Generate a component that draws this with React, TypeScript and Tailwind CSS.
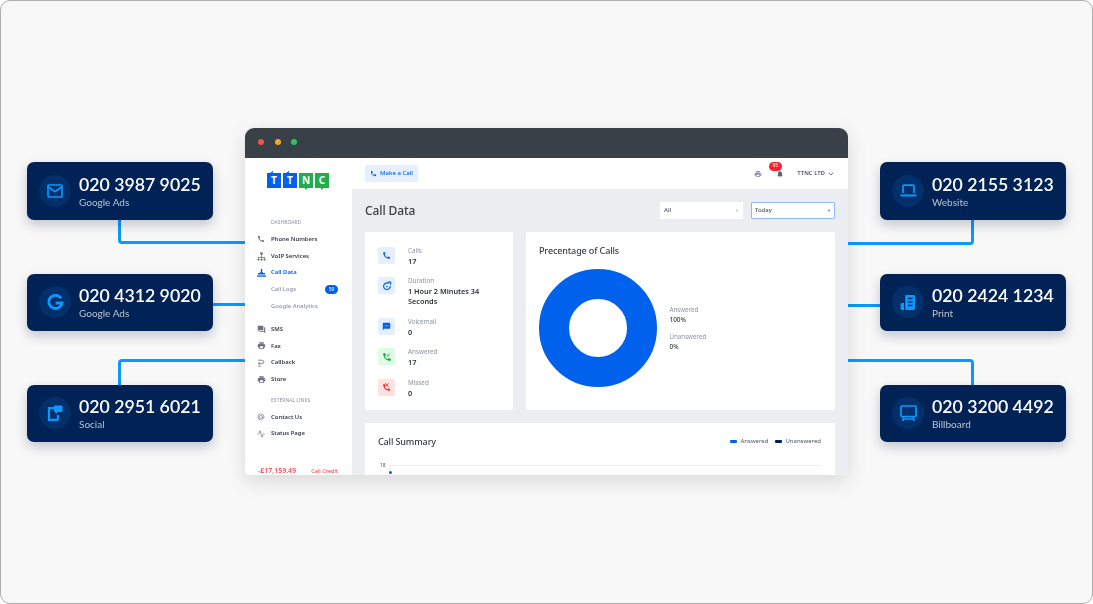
import React from 'react';
import { Activity, ChevronDown, X } from 'lucide-react';
import {
  MdAlternateEmail,
  MdCall,
  MdForum,
  MdNotifications,
  MdPhoneCallback,
  MdPrint,
  MdSms,
} from 'react-icons/md';

const BLUE = '#0a99ff';

// Icons for the number cards
const MailIcon = () => (
  <svg width="16" height="14" viewBox="0 0 16 14" fill="none" stroke={BLUE} strokeWidth="1.7">
    <rect x="1" y="1" width="14" height="12" rx="1" />
    <path d="M1.5 3l6.5 4.6L14.5 3" />
  </svg>
);

const GoogleIcon = () => (
  <svg width="17" height="17" viewBox="0 0 17 17" fill="none" stroke={BLUE} strokeWidth="2.8">
    <path d="M14 4.2A6.6 6.6 0 1 0 15 9H8.6" />
  </svg>
);

const SocialIcon = () => (
  <svg width="16" height="16" viewBox="0 0 16 16" fill="none">
    <path d="M8 3.2H2v11.6h7.5a1.5 1.5 0 0 0 1.5-1.5V10" stroke={BLUE} strokeWidth="2.2" />
    <rect x="7" y="0.5" width="8.5" height="6.5" rx="1" fill={BLUE} />
    <path d="M8.5 7v2.5L11 7z" fill={BLUE} />
  </svg>
);

const LaptopIcon = () => (
  <svg width="17" height="14" viewBox="0 0 17 14" fill="none" stroke={BLUE} strokeWidth="1.7">
    <path d="M3 9V2.2a1 1 0 0 1 1-1h9a1 1 0 0 1 1 1V9" />
    <path d="M0.5 11.5h16" strokeWidth="2" />
  </svg>
);

const PrintIcon = () => (
  <svg width="16" height="17" viewBox="0 0 16 17" fill="none">
    <rect x="5.2" y="1" width="9.8" height="15" rx="1" fill={BLUE} />
    <path d="M8 4.5h4.5M8 8h4.5M8 11.5h4.5" stroke="#03306a" strokeWidth="1.6" />
    <path d="M4 9H2a1.4 1.4 0 0 0-1.4 1.4v4A1.6 1.6 0 0 0 2.2 16H4z" fill={BLUE} />
  </svg>
);

const BillboardIcon = () => (
  <svg width="17" height="17" viewBox="0 0 17 17" fill="none" stroke={BLUE} strokeWidth="1.7">
    <rect x="1" y="1" width="15" height="10.5" rx="1" />
    <path d="M4 11.5L2.8 16M13 11.5l1.2 4.5M3.5 14h10" />
  </svg>
);

// Sidebar icons the packages have no close match for
const VoipIcon = () => (
  <svg width="9" height="9" viewBox="0 0 9 9" fill="currentColor">
    <circle cx="4.5" cy="1.6" r="1.4" />
    <path d="M4.1 3h.8v2h3v1.5h-.8V5.8H4.9v.7h-.8v-.7H1.9v.7h-.8V5h3z" />
    <circle cx="1.5" cy="7.6" r="1.1" />
    <circle cx="4.5" cy="7.6" r="1.1" />
    <circle cx="7.5" cy="7.6" r="1.1" />
  </svg>
);

const CallDataIcon = () => (
  <svg width="9" height="9" viewBox="0 0 9 9" fill="#0061ec">
    <rect x="0" y="7.4" width="9" height="1.3" />
    <path d="M1 6.6V5h1.6l1.2-1V1h1.4v3l1.2 1H8v1.6z" />
  </svg>
);

const CallbackIcon = () => (
  <svg width="8" height="8" viewBox="0 0 8 8" fill="none" stroke="currentColor" strokeWidth="0.8">
    <path d="M1 1.2h4.2a1.7 1.7 0 0 1 0 3.4H1.4" />
    <path d="M2.8 3.2L1.2 4.6l1.6 1.4M1 7.2h3" />
  </svg>
);

const DurationIcon = () => (
  <svg width="10" height="10" viewBox="0 0 10 10" fill="none" stroke="#0061ec" strokeWidth="1.2">
    <path d="M6.6 2.4A3.3 3.3 0 1 0 8.2 5" />
    <circle cx="4.9" cy="5.6" r="0.8" fill="#0061ec" stroke="none" />
    <path d="M5.6 1.2h3v2.6" />
  </svg>
);

const MissedIcon = () => (
  <div className="relative">
    <MdCall size={9} className="text-[#ef2b2b]" />
    <X size={6} strokeWidth={3} className="absolute left-[2px] top-[-1px] text-[#ef2b2b]" />
  </div>
);

type NumberCardProps = {
  number: string;
  label: string;
  icon: React.ReactNode;
  className: string;
};

const NumberCard = ({ number, label, icon, className }: NumberCardProps) => (
  <div
    className={`absolute flex h-[57.5px] w-[186px] items-center rounded-[7px] bg-[#002254] pl-[12px] shadow-[0_5px_12px_rgba(0,20,60,0.22)] ${className}`}
  >
    <div className="flex h-[32px] w-[32px] shrink-0 items-center justify-center rounded-full bg-[#03306a]">
      {icon}
    </div>
    <div className="ml-[8px] flex flex-col whitespace-nowrap font-['Lato',sans-serif]">
      <span className="text-[17.7px] font-semibold leading-[22px] text-white">{number}</span>
      <span className="text-[10px] leading-[12px] text-[#b9c4d4]">{label}</span>
    </div>
  </div>
);

const lineClass = 'absolute border-[#0a99ff]';

type NavItemProps = {
  icon?: React.ReactNode;
  label: string;
  active?: boolean;
  sub?: boolean;
  badge?: string;
};

const NavItem = ({ icon, label, active, sub, badge }: NavItemProps) => (
  <div className="flex h-[16.7px] items-center">
    <div className="flex w-[26px] shrink-0 justify-center pl-[6px] text-[#6b7280]">{icon}</div>
    <span
      className={`whitespace-nowrap text-[5.9px] ${sub ? 'font-medium text-[#8b93a1]' : 'font-semibold'} ${
        active ? 'text-[#0061ec]' : sub ? '' : 'text-[#343a46]'
      }`}
    >
      {label}
    </span>
    {badge && (
      <span className="ml-auto mr-[14px] flex h-[9.5px] w-[13px] items-center justify-center rounded-full bg-[#0061ec] text-[5px] text-white">
        {badge}
      </span>
    )}
  </div>
);

const SectionTitle = ({ children }: { children: React.ReactNode }) => (
  <div className="pl-[26px] text-[5px] leading-[8px] text-[#8b93a1]">{children}</div>
);

type StatProps = {
  icon: React.ReactNode;
  tint: string;
  label: string;
  value: React.ReactNode;
};

const Stat = ({ icon, tint, label, value }: StatProps) => (
  <div className="flex items-start">
    <div className={`mt-[1px] flex h-[17px] w-[17px] shrink-0 items-center justify-center rounded-[2px] ${tint}`}>
      {icon}
    </div>
    <div className="ml-[13px] w-[80px]">
      <div className="text-[6.3px] leading-[10px] text-[#8b93a1]">{label}</div>
      <div className="text-[7.3px] font-semibold leading-[10px] text-[#2c323c]">{value}</div>
    </div>
  </div>
);

const Logo = () => (
  <div className="flex gap-[2px]">
    {['T', 'T', 'N', 'C'].map((letter, i) => (
      <div
        key={i}
        className={`relative flex h-[15px] w-[14px] items-center justify-center text-[10px] font-bold text-white ${
          i < 2 ? 'bg-[#0061ec]' : 'bg-[#1fae4b]'
        }`}
      >
        {letter}
        {i < 2 ? (
          <span className="absolute left-[3px] top-[-2px] h-[2px] w-[3px] bg-[#0061ec] [clip-path:polygon(100%_0,100%_100%,0_100%)]" />
        ) : (
          <span className="absolute bottom-[-2px] left-[6px] h-[2px] w-[3px] bg-[#1fae4b] [clip-path:polygon(0_0,100%_0,0_100%)]" />
        )}
      </div>
    ))}
  </div>
);

const Window = () => (
  <div className="absolute left-[245px] top-[128px] flex h-[347px] w-[603px] flex-col overflow-hidden rounded-b-[4px] rounded-t-[9px] bg-white font-['Noto_Sans',sans-serif] shadow-[0_6px_20px_rgba(0,0,0,0.13)]">
    <div className="flex h-[30px] shrink-0 items-center gap-[10.5px] bg-[#3a4047] pb-[3px] pl-[13px]">
      <span className="h-[6px] w-[6px] rounded-full bg-[#ef5543]" />
      <span className="h-[6px] w-[6px] rounded-full bg-[#f5a623]" />
      <span className="h-[6px] w-[6px] rounded-full bg-[#2fc35f]" />
    </div>

    <div className="flex min-h-0 flex-1">
      {/* Sidebar */}
      <div className="flex w-[107px] shrink-0 flex-col">
        <div className="flex justify-center pb-[30px] pr-[1px] pt-[15px]">
          <Logo />
        </div>
        <SectionTitle>DASHBOARD</SectionTitle>
        <div className="mt-[5px]">
          <NavItem icon={<MdCall size={8} />} label="Phone Numbers" />
          <NavItem icon={<VoipIcon />} label="VoIP Services" />
          <NavItem icon={<CallDataIcon />} label="Call Data" active />
          <NavItem label="Call Logs" sub badge="59" />
          <NavItem label="Google Analytics" sub />
        </div>
        <div className="mt-[6.5px]">
          <NavItem icon={<MdForum size={9} />} label="SMS" />
          <NavItem icon={<MdPrint size={9} />} label="Fax" />
          <NavItem icon={<CallbackIcon />} label="Callback" />
          <NavItem icon={<MdPrint size={9} />} label="Store" />
        </div>
        <div className="mt-[8.5px]">
          <SectionTitle>EXTERNAL LINKS</SectionTitle>
        </div>
        <div className="mt-[4.5px]">
          <NavItem icon={<MdAlternateEmail size={8} />} label="Contact Us" />
          <NavItem icon={<Activity size={8} />} label="Status Page" />
        </div>
        <div className="mt-auto flex items-center justify-between pl-[13px] pr-[14px] text-[#f5333f]">
          <span className="text-[7px] font-medium leading-[8px]">-£17,159.49</span>
          <span className="text-[5.6px] leading-[8px]">Call Credit</span>
        </div>
      </div>

      {/* Main */}
      <div className="flex min-w-0 flex-1 flex-col bg-[#ebedf1]">
        <div className="flex h-[31px] shrink-0 items-center bg-white pl-[13px] pr-[13px]">
          <div className="flex h-[17.5px] w-[53px] items-center justify-center gap-[3px] rounded-[2px] bg-[#e5efff] text-[6px] font-medium text-[#0061ec]">
            <MdCall size={7} />
            Make a Call
          </div>
          <MdPrint size={8} className="ml-auto text-[#8b93a1]" />
          <div className="relative ml-[14px]">
            <MdNotifications size={8} className="text-[#5b6472]" />
            <span className="absolute left-[-7px] top-[-8px] flex h-[9px] w-[13px] items-center justify-center rounded-full bg-[#f5222f] text-[5px] text-white">
              95
            </span>
          </div>
          <span className="ml-[13.5px] whitespace-nowrap text-[6px] font-medium text-[#343a46]">TTNC LTD</span>
          <ChevronDown size={8} className="ml-[2px] text-[#343a46]" />
        </div>

        <div className="flex h-[43px] shrink-0 items-center pl-[13px] pr-[13px]">
          <h1 className="text-[12px] font-medium leading-none tracking-[-0.1px] text-[#3a4047]">Call Data</h1>
          <div className="ml-auto flex gap-[8px]">
            <div className="flex h-[17.5px] w-[83px] items-center justify-between bg-white px-[4px] text-[6px] font-medium text-[#4b5563]">
              All
              <span className="text-[4px] text-[#b8bec8]">▼</span>
            </div>
            <div className="flex h-[17.5px] w-[84px] items-center justify-between rounded-[1px] border border-[#8db6fb] bg-white px-[3px] text-[6px] font-medium text-[#4b5563]">
              Today
              <span className="text-[4px] text-[#6b7280]">▼</span>
            </div>
          </div>
        </div>

        <div className="flex shrink-0 gap-[13px] px-[13px]">
          <div className="flex h-[178px] w-[148px] flex-col gap-[10.4px] rounded-[2px] bg-white pl-[13px] pt-[14px]">
            <Stat tint="bg-[#e5efff]" icon={<MdCall size={9} className="text-[#0061ec]" />} label="Calls" value="17" />
            <Stat tint="bg-[#e5efff]" icon={<DurationIcon />} label="Duration" value="1 Hour 2 Minutes 34 Seconds" />
            <Stat tint="bg-[#e5efff]" icon={<MdSms size={9} className="text-[#0061ec]" />} label="Voicemail" value="0" />
            <Stat
              tint="bg-[#dcfce3]"
              icon={<MdPhoneCallback size={10} className="text-[#16a34a]" />}
              label="Answered"
              value="17"
            />
            <Stat tint="bg-[#fee2e2]" icon={<MissedIcon />} label="Missed" value="0" />
          </div>

          <div className="flex h-[178px] flex-1 flex-col rounded-[2px] bg-white pl-[13px] pt-[12px]">
            <h2 className="text-[9px] font-medium leading-[13px] tracking-[-0.12px] text-[#3a4047]">
              Precentage of Calls
            </h2>
            <div className="mt-[12px] flex items-center">
              <svg width="118" height="118" viewBox="0 0 118 118">
                <circle cx="59" cy="59" r="44" fill="none" stroke="#0061ec" strokeWidth="30" />
              </svg>
              <div className="ml-[12.5px] flex flex-col gap-[7px]">
                <div>
                  <div className="text-[6.2px] leading-[10px] text-[#8b93a1]">Answered</div>
                  <div className="text-[6.4px] font-medium leading-[10px] text-[#343a46]">100%</div>
                </div>
                <div>
                  <div className="text-[6.2px] leading-[10px] text-[#8b93a1]">Unanswered</div>
                  <div className="text-[6.4px] font-medium leading-[10px] text-[#343a46]">0%</div>
                </div>
              </div>
            </div>
          </div>
        </div>

        <div className="mx-[13px] mt-[13px] min-h-0 flex-1 rounded-t-[2px] bg-white pl-[13px] pr-[14px] pt-[12px]">
          <div className="flex items-center justify-between">
            <h2 className="text-[9px] font-medium leading-[13px] tracking-[-0.12px] text-[#3a4047]">Call Summary</h2>
            <div className="flex items-center text-[6px] text-[#4b5563]">
              <span className="mr-[3px] h-[3px] w-[7px] rounded-[1px] bg-[#0061ec]" />
              Answered
              <span className="ml-[7px] mr-[3px] h-[3px] w-[7px] rounded-[1px] bg-[#002254]" />
              Unanswered
            </div>
          </div>
          <div className="mt-[14px] flex">
            <span className="ml-[2px] text-[5px] leading-[6px] text-[#4b5563]">18</span>
            <div className="relative ml-[3px] mt-[3px] h-[12px] flex-1 border-l border-t border-[#eceef2]">
              <span className="absolute left-[-1px] top-[5px] h-[3px] w-[3px] rounded-full bg-[#0061ec]" />
            </div>
          </div>
        </div>
      </div>
    </div>
  </div>
);

export default function App() {
  return (
    <div className="relative h-[604px] w-[1093px] overflow-hidden rounded-[10px] border border-[#aeaeae] bg-[#f8f8f8]">
      <div className="absolute -left-px -top-px h-[604px] w-[1093px] blur-[0.3px]">
        {/* Connector lines */}
        <div className={`${lineClass} left-[118px] top-[219px] h-[25px] w-[127px] rounded-bl-[4px] border-b-[3px] border-l-[3px]`} />
        <div className={`${lineClass} left-[213px] top-[303px] w-[32px] border-b-[3px]`} />
        <div className={`${lineClass} left-[118px] top-[359px] h-[26px] w-[127px] rounded-tl-[4px] border-l-[3px] border-t-[3px]`} />
        <div className={`${lineClass} left-[848px] top-[219px] h-[25.5px] w-[126px] rounded-br-[4px] border-b-[3px] border-r-[3px]`} />
        <div className={`${lineClass} left-[848px] top-[304px] w-[32px] border-b-[3px]`} />
        <div className={`${lineClass} left-[848px] top-[359px] h-[26px] w-[126px] rounded-tr-[4px] border-r-[3px] border-t-[3px]`} />

        <NumberCard className="left-[27px] top-[162px]" number="020 3987 9025" label="Google Ads" icon={<MailIcon />} />
        <NumberCard className="left-[27px] top-[273.5px]" number="020 4312 9020" label="Google Ads" icon={<GoogleIcon />} />
        <NumberCard className="left-[27px] top-[384.5px]" number="020 2951 6021" label="Social" icon={<SocialIcon />} />
        <NumberCard className="left-[880px] top-[162px]" number="020 2155 3123" label="Website" icon={<LaptopIcon />} />
        <NumberCard className="left-[880px] top-[273.5px]" number="020 2424 1234" label="Print" icon={<PrintIcon />} />
        <NumberCard className="left-[880px] top-[384.5px]" number="020 3200 4492" label="Billboard" icon={<BillboardIcon />} />

        <Window />
      </div>
    </div>
  );
}
